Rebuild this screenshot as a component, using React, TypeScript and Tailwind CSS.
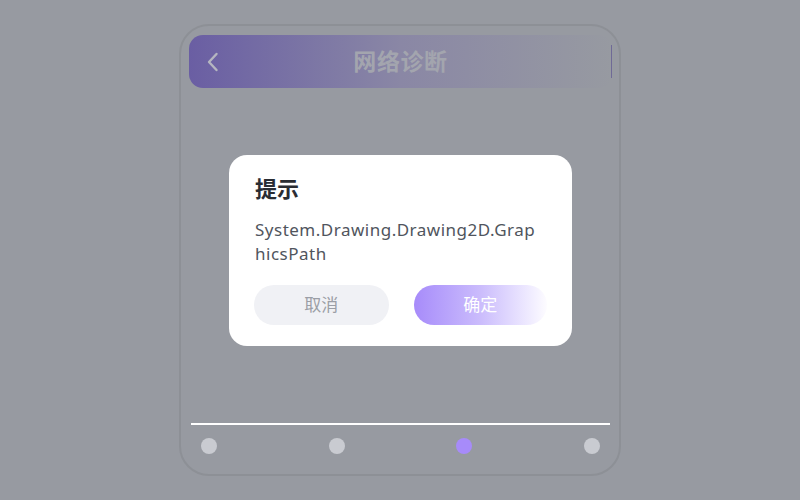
import React from 'react';

const font = { fontFamily: '"Noto Sans", "Noto Sans CJK SC", sans-serif' };

const Dot: React.FC<{ active?: boolean }> = ({ active }) => (
  <div className={`w-4 h-4 rounded-full ${active ? 'bg-[#a78bfa]' : 'bg-[#c9cbd1]'}`} />
);

const App: React.FC = () => {
  return (
    <div className="w-[800px] h-[500px] bg-[#979aa1] relative overflow-hidden" style={font}>
      {/* phone frame */}
      <div className="pt-6 flex justify-center">
        <div className="w-[442px] h-[452px] rounded-[30px] border-2 border-[#8d9096] bg-[#979aa1] flex flex-col pl-[8px] pr-[7px] pt-[9px] pb-[20px]">
          <div className="h-[53px] rounded-[14px] bg-gradient-to-r from-[#6a5ea3] via-[#8a87a5] to-[#979aa1] flex items-center relative">
            <svg className="absolute left-[12px]" width="24" height="24" viewBox="0 0 24 24" fill="none" stroke="#b5b6c0" strokeWidth="2.4" strokeLinecap="round" strokeLinejoin="round">
              <path d="M15.5 4 L8 12 L15.5 20" />
            </svg>
            <div className="flex-1 text-center text-[23px] font-bold text-[#a3a5ae] tracking-wide">网络诊断</div>
            <div className="absolute right-0 top-[10px] w-[1px] h-[33px] bg-[#6f6a96]" />
          </div>
          <div className="flex-1" />
          <div className="h-[2px] bg-white mx-[2px]" />
          <div className="flex justify-between items-center px-[12px] pt-[13px]">
            <Dot />
            <Dot />
            <Dot active />
            <Dot />
          </div>
        </div>
      </div>

      {/* dialog */}
      <div className="absolute left-[229px] top-[155px] w-[343px] h-[191px] bg-white rounded-[18px] px-[25px] pt-[18px]">
        <div className="text-[22px] font-bold text-[#2a2d33] leading-[30px] pl-[1px]">提示</div>
        <div className="mt-[15px] w-[286px] pl-[1px] text-[17px] tracking-[0.5px] text-[#50555d] leading-[24px] break-all">
          System.Drawing.Drawing2D.GraphicsPath
        </div>
        <div className="mt-[19px] flex gap-[25px]">
          <button className="w-[135px] h-[40px] rounded-full bg-[#f0f1f5] text-[17px] text-[#9b9ea6]">取消</button>
          <button className="w-[134px] h-[40px] rounded-full bg-gradient-to-r from-[#a78bfa] via-[#cbbcfc] to-[#fdfcff] text-[17px] text-white">确定</button>
        </div>
      </div>
    </div>
  );
};

export default App;
